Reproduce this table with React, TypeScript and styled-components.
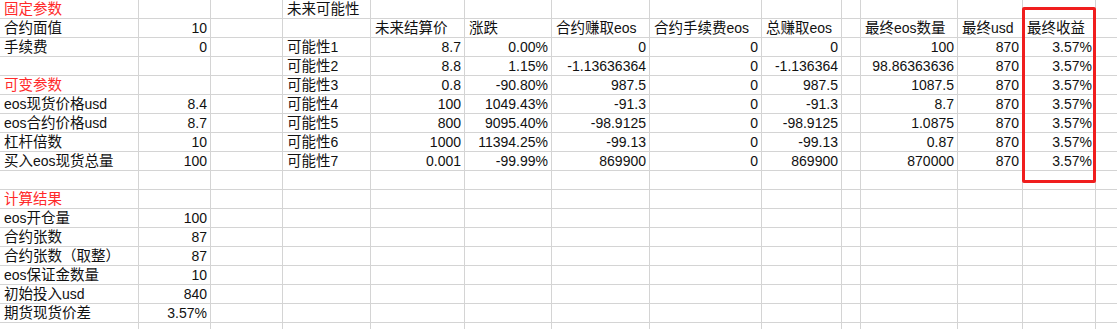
import React from "react";
import styled, { createGlobalStyle } from "styled-components";

const GlobalStyle = createGlobalStyle`
  html, body {
    margin: 0;
    padding: 0;
    background: #ffffff;
  }
  body {
    font-family: "Liberation Sans", "Noto Sans CJK SC", sans-serif;
    overflow: hidden;
  }
`;

const Page = styled.div`
  position: relative;
  width: 1117px;
  height: 329px;
  overflow: hidden;
`;

const Sheet = styled.div`
  display: grid;
  grid-template-columns: 138px 71px 71px 87px 93px 86px 97px 111px 79px 18px 96px 64px 72px 1fr;
  grid-auto-rows: 18px;
  gap: 1px;
  background: #d4d4d4;
  width: 1117px;
`;

const Cell = styled.div<{ $right?: boolean; $red?: boolean }>`
  background: #ffffff;
  padding: 0 3px 0 4px;
  font-size: 14px;
  line-height: 18px;
  white-space: nowrap;
  color: ${(p) => (p.$red ? "#ff2a2a" : "#111111")};
  text-align: ${(p) => (p.$right ? "right" : "left")};
`;

// CJK glyphs run a touch larger than the latin ones in the sheet
const Han = styled.span`
  font-family: "Noto Sans CJK SC", sans-serif;
  font-size: 14.5px;
  line-height: 1;
`;

// highlight drawn over the last column
const Highlight = styled.div`
  position: absolute;
  left: 1022px;
  top: 7px;
  width: 74px;
  height: 176px;
  box-sizing: border-box;
  border: 3px solid #f01e1e;
  border-radius: 2px;
  pointer-events: none;
`;

const e = "";
const rows: string[][] = [
  ["固定参数", e, e, "未来可能性", e, e, e, e, e, e, e, e, e, e],
  ["合约面值", "10", e, e, "未来结算价", "涨跌", "合约赚取eos", "合约手续费eos", "总赚取eos", e, "最终eos数量", "最终usd", "最终收益", e],
  ["手续费", "0", e, "可能性1", "8.7", "0.00%", "0", "0", "0", e, "100", "870", "3.57%", e],
  [e, e, e, "可能性2", "8.8", "1.15%", "-1.13636364", "0", "-1.136364", e, "98.86363636", "870", "3.57%", e],
  ["可变参数", e, e, "可能性3", "0.8", "-90.80%", "987.5", "0", "987.5", e, "1087.5", "870", "3.57%", e],
  ["eos现货价格usd", "8.4", e, "可能性4", "100", "1049.43%", "-91.3", "0", "-91.3", e, "8.7", "870", "3.57%", e],
  ["eos合约价格usd", "8.7", e, "可能性5", "800", "9095.40%", "-98.9125", "0", "-98.9125", e, "1.0875", "870", "3.57%", e],
  ["杠杆倍数", "10", e, "可能性6", "1000", "11394.25%", "-99.13", "0", "-99.13", e, "0.87", "870", "3.57%", e],
  ["买入eos现货总量", "100", e, "可能性7", "0.001", "-99.99%", "869900", "0", "869900", e, "870000", "870", "3.57%", e],
  [],
  ["计算结果"],
  ["eos开仓量", "100"],
  ["合约张数", "87"],
  ["合约张数（取整）", "87"],
  ["eos保证金数量", "10"],
  ["初始投入usd", "840"],
  ["期货现货价差", "3.57%"],
  [],
];

const redLabels = ["固定参数", "可变参数", "计算结果"];
const isNumber = (v: string) => /^-?[\d.]+%?$/.test(v);

const renderText = (v: string) =>
  v.split(/([\u3000-\u9fff\uff00-\uffef]+)/).map((part, i) =>
    /[\u3000-\u9fff\uff00-\uffef]/.test(part) ? <Han key={i}>{part}</Han> : part
  );

const App = () => {
  return (
    <Page>
      <GlobalStyle />
      <Sheet>
        {rows.map((row, r) =>
          Array.from({ length: 14 }).map((_, c) => {
            const v = row[c] || "";
            return (
              <Cell key={r + "-" + c} $right={isNumber(v)} $red={redLabels.includes(v)}>
                {renderText(v)}
              </Cell>
            );
          })
        )}
      </Sheet>
      <Highlight />
    </Page>
  );
};

export default App;
